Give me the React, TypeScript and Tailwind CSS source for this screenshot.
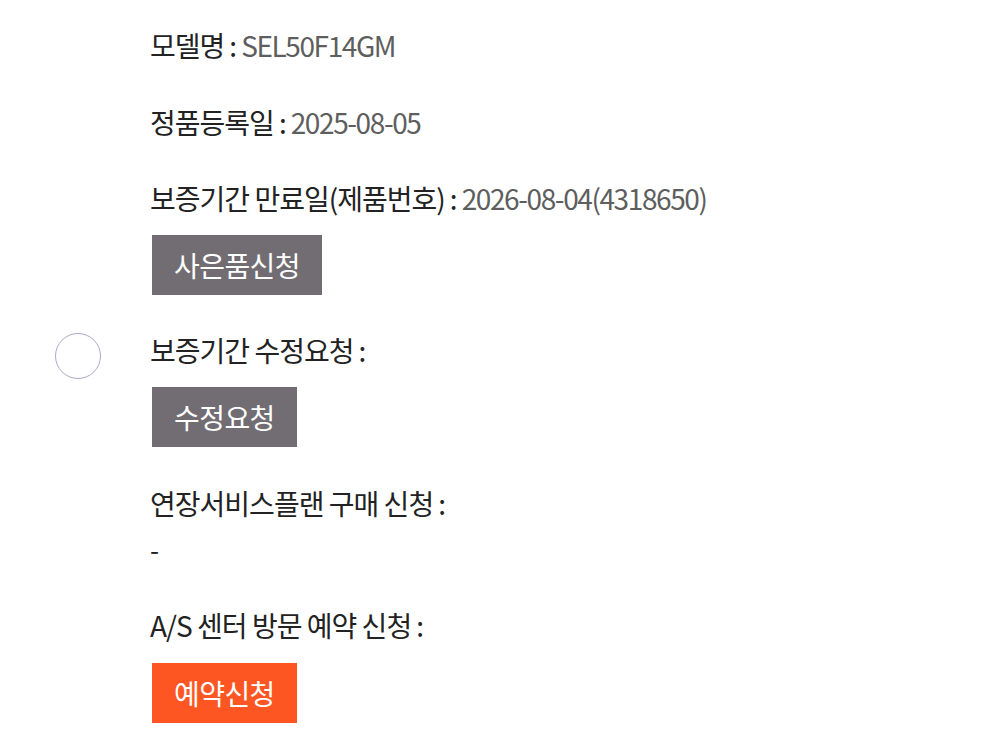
import React from 'react';

const font = { fontFamily: '"Noto Sans CJK KR", "Noto Sans", sans-serif' };

function Row({ label, value }: { label: string; value?: string }) {
  return (
    <p className="text-[28px] leading-[36px] tracking-[-0.035em] text-[#222]">
      {label}
      <span className="mx-[5px]">:</span>
      {value && <span className="tracking-[-0.05em] text-[#5e5e5e]">{value}</span>}
    </p>
  );
}

function Btn({ children, orange }: { children: React.ReactNode; orange?: boolean }) {
  return (
    <button
      className={
        'h-[60px] px-[22px] text-[28px] tracking-[-0.02em] text-white ' +
        (orange ? 'bg-[#fe5622]' : 'bg-[#716d73]')
      }
    >
      {children}
    </button>
  );
}

export default function App() {
  return (
    <div className="relative w-[1003px] h-[750px] bg-white overflow-hidden" style={font}>
      <div className="absolute left-[55px] top-[333px] w-[46px] h-[46px] rounded-full border border-[#a9a9c9]" />
      <div className="pl-[150px] pt-[27px] flex flex-col items-start">
        <Row label="모델명" value="SEL50F14GM" />
        <div className="h-[41px]" />
        <Row label="정품등록일" value="2025-08-05" />
        <div className="h-[40px]" />
        <Row label="보증기간 만료일(제품번호)" value="2026-08-04(4318650)" />
        <div className="h-[19px]" />
        <div className="pl-[2px]"><Btn>사은품신청</Btn></div>
        <div className="h-[37px]" />
        <Row label="보증기간 수정요청" />
        <div className="h-[19px]" />
        <div className="pl-[2px]"><Btn>수정요청</Btn></div>
        <div className="h-[38px]" />
        <Row label="연장서비스플랜 구매 신청" />
        <p className="mt-[10px] text-[26px] leading-[36px] text-[#222]">-</p>
        <div className="h-[40px]" />
        <Row label="A/S 센터 방문 예약 신청" />
        <div className="h-[20px]" />
        <div className="pl-[2px]"><Btn orange>예약신청</Btn></div>
      </div>
    </div>
  );
}
